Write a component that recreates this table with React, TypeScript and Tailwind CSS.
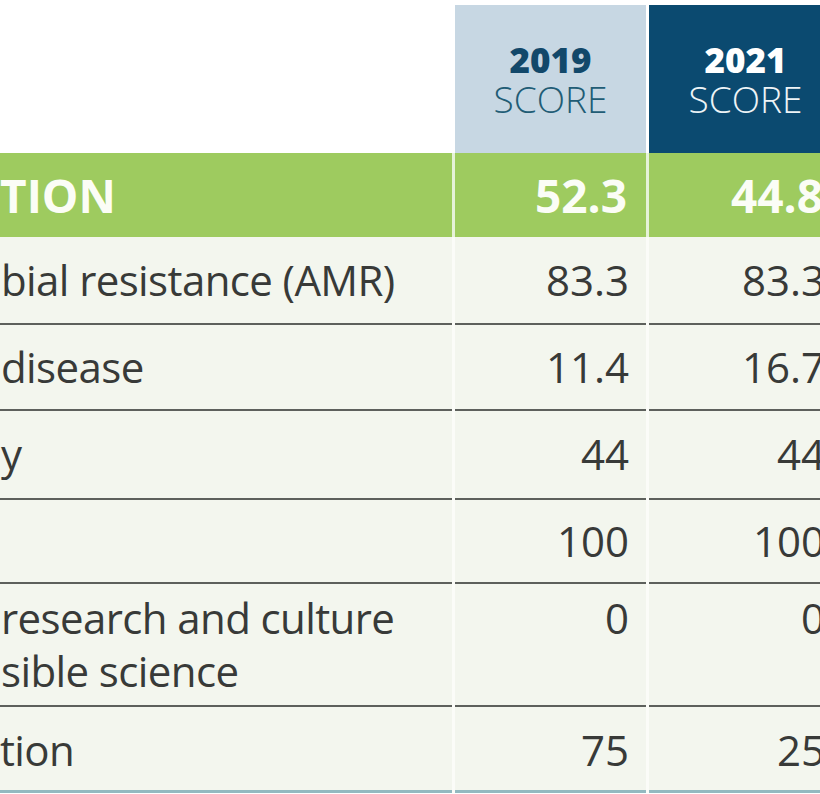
import React from "react";

type Row = { label: string[]; a: string; b: string; h: string; pt: string; lead: string };

const rows: Row[] = [
  { label: ["bial resistance (AMR)"], a: "83.3", b: "83.3", h: "h-[88px]", pt: "pt-[18px]", lead: "leading-[50px]" },
  { label: ["disease"], a: "11.4", b: "16.7", h: "h-[86px]", pt: "pt-[17px]", lead: "leading-[50px]" },
  { label: ["y"], a: "44", b: "44", h: "h-[89px]", pt: "pt-[18px]", lead: "leading-[50px]" },
  { label: [""], a: "100", b: "100", h: "h-[84px]", pt: "pt-[16px]", lead: "leading-[50px]" },
  { label: ["research and culture", "sible science"], a: "0", b: "0", h: "h-[123px]", pt: "pt-[7px]", lead: "leading-[53px]" },
];

export default function App() {
  return (
    <div
      className="w-[820px] h-[794px] overflow-hidden bg-white text-[#383a38]"
      style={{ fontFamily: '"Open Sans", "Noto Sans", sans-serif' }}
    >
      <div className="w-[843px]">
        {/* header */}
        <div className="flex gap-[3px] pt-[5px]">
          <div className="w-[452px] h-[148px] bg-white" />
          <div className="w-[191px] h-[148px] bg-[#c7d7e3] flex flex-col items-center justify-center">
            <div className="text-[35px] font-extrabold leading-[39px] text-[#12486a]">2019</div>
            <div className="text-[37px] font-light leading-[39px] text-[#215c75]">SCORE</div>
          </div>
          <div className="w-[193px] h-[148px] bg-[#0b4a70] flex flex-col items-center justify-center">
            <div className="text-[35px] font-extrabold leading-[39px] text-white">2021</div>
            <div className="text-[37px] font-light leading-[39px] text-[#eef4f7]">SCORE</div>
          </div>
        </div>
        {/* green row */}
        <div className="flex gap-[3px] bg-[#e6f2d8]">
          <div className="w-[452px] h-[84px] bg-[#9ecb5f] flex items-center text-[46px] font-bold text-[#fbfdf6] leading-none">
            TION
          </div>
          <div className="w-[191px] h-[84px] bg-[#9ecb5f] flex items-center justify-end pr-[19px] text-[46px] font-bold text-[#fbfdf6] leading-none">
            52.3
          </div>
          <div className="w-[193px] h-[84px] bg-[#9ecb5f] flex items-center justify-end pr-[19px] text-[46px] font-bold text-[#fbfdf6] leading-none">
            44.8
          </div>
        </div>
        {/* data rows */}
        <div className="bg-[#fbfcf8]">
          {rows.map((r, i) => (
            <div key={i} className="flex gap-[3px] text-[42px]">
              <div className={`w-[452px] ${r.h} ${r.pt} ${r.lead} bg-[#f3f6ee] border-b-2 border-[#5d605c] pl-[1px] tracking-[-0.6px]`}>
                {r.label.map((l, j) => (
                  <div key={j}>{l || "\u00a0"}</div>
                ))}
              </div>
              <div className={`w-[191px] ${r.h} ${r.pt} ${r.lead} bg-[#f3f6ee] border-b-2 border-[#5d605c] text-right pr-[17px]`}>
                {r.a}
              </div>
              <div className={`w-[193px] ${r.h} ${r.pt} ${r.lead} bg-[#f3f6ee] border-b-2 border-[#5d605c] text-right pr-[17px]`}>
                {r.b}
              </div>
            </div>
          ))}
          <div className="flex gap-[3px] text-[42px]">
            <div className="w-[452px] h-[86px] pt-[18px] leading-[50px] bg-[#f3f6ee] border-b-[3px] border-[#93b9c0] tracking-[-0.6px]">tion</div>
            <div className="w-[191px] h-[86px] pt-[18px] leading-[50px] bg-[#f3f6ee] border-b-[3px] border-[#93b9c0] text-right pr-[17px]">75</div>
            <div className="w-[193px] h-[86px] pt-[18px] leading-[50px] bg-[#f3f6ee] border-b-[3px] border-[#93b9c0] text-right pr-[17px]">25</div>
          </div>
        </div>
      </div>
    </div>
  );
}
